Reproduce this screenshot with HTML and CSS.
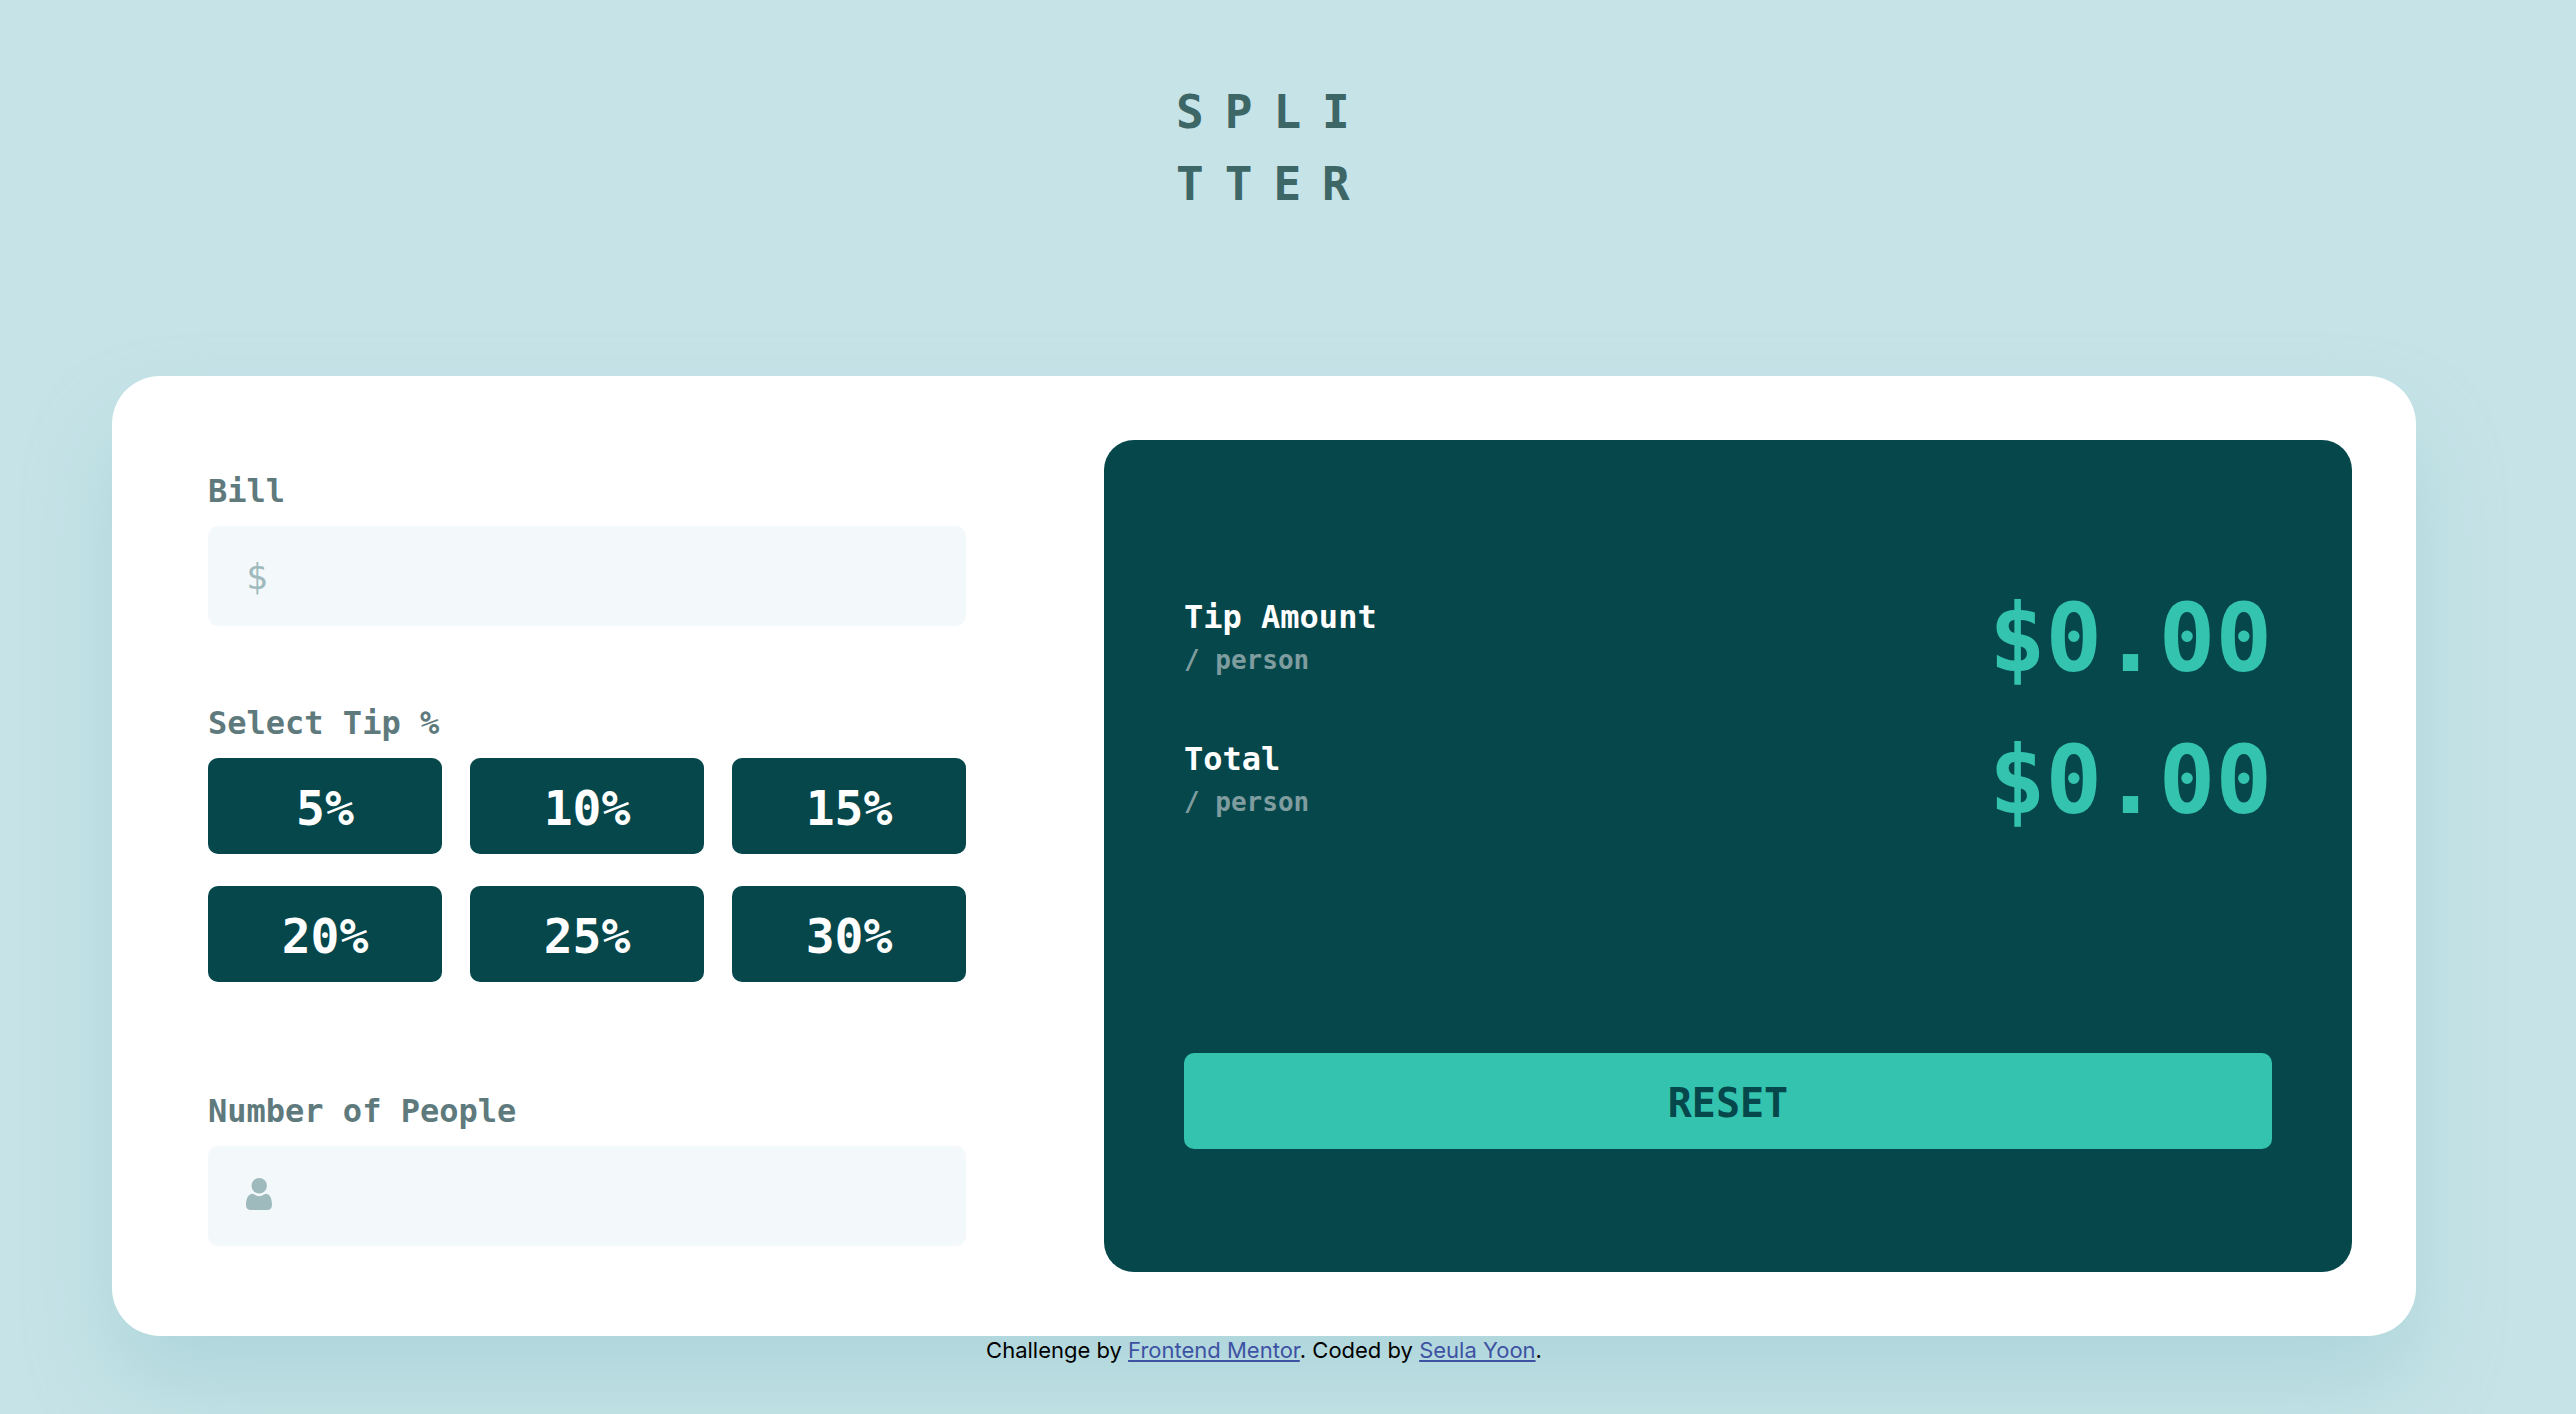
FILE: index.html
```html
<!DOCTYPE html>
<html lang="en">
<head>
  <meta charset="UTF-8">
  <meta name="viewport" content="width=device-width, initial-scale=1">
  <title>Splitter | Tip calculator</title>
  <link rel="stylesheet" href="styles.css">
</head>
<body class="page">
  <header class="header">
    <h1 class="logo">SPLI<br>TTER</h1>
  </header>
  <main class="card">
    <form class="form">
      <div class="group">
        <label class="label" for="bill">Bill</label>
        <div class="field">
          <span class="currency" aria-hidden="true">$</span>
          <input class="input" id="bill" type="text" inputmode="decimal">
        </div>
      </div>
      <fieldset class="group group-tips">
        <legend class="label">Select Tip %</legend>
        <div class="tips">
          <button class="tip" type="button">5%</button>
          <button class="tip" type="button">10%</button>
          <button class="tip" type="button">15%</button>
          <button class="tip" type="button">20%</button>
          <button class="tip" type="button">25%</button>
          <button class="tip" type="button">30%</button>
        </div>
      </fieldset>
      <div class="group">
        <label class="label" for="people">Number of People</label>
        <div class="field">
          <svg class="person" viewBox="0 0 26 32" aria-hidden="true">
            <circle cx="13.200" cy="7.700" r="7.700"/>
            <path d="M6 15.700Q7.200 15.700 8.300 16.600Q13.200 19.700 18.100 16.600Q19.200 15.700 20.400 15.700C24.300 16.200 26 21.500 26 27Q26 32 21 32H5Q0 32 0 27C0 21.500 1.900 16.200 6 15.700Z"/>
          </svg>
          <input class="input" id="people" type="text" inputmode="numeric">
        </div>
      </div>
    </form>
    <section class="results" aria-label="Results">
      <div class="result">
        <div class="caption">
          <h2 class="caption-title">Tip Amount</h2>
          <p class="caption-unit">/ person</p>
        </div>
        <output class="amount">$0.00</output>
      </div>
      <div class="result">
        <div class="caption">
          <h2 class="caption-title">Total</h2>
          <p class="caption-unit">/ person</p>
        </div>
        <output class="amount">$0.00</output>
      </div>
      <button class="reset" type="button">RESET</button>
    </section>
  </main>
  <footer class="footer">
    Challenge by <a class="link" href="#">Frontend Mentor</a>. Coded by <a class="link" href="#">Seula Yoon</a>.
  </footer>
</body>
</html>
```

FILE: styles.css
```css
* {
  box-sizing: border-box;
}

.page {
  margin: 0;
  min-height: 100vh;
  padding: 76px 160px 0 112px;
  background: #c6e3e7;
  font-family: "DejaVu Sans Mono", monospace;
  font-weight: 700;
}

.header {
  display: flex;
  justify-content: center;
  padding-bottom: 156px;
}

.logo {
  width: 176px;
  margin: 0;
  color: #3d6666;
  font-size: 46px;
  line-height: 72px;
  letter-spacing: 21px;
  white-space: nowrap;
}

.card {
  display: grid;
  grid-template-columns: 758fr 1248fr;
  column-gap: 138px;
  padding: 64px 64px 64px 96px;
  border-radius: 48px;
  background: #fff;
  box-shadow: 0 50px 90px #aed6db;
}

.form {
  display: flex;
  flex-direction: column;
  gap: 74px;
  padding: 28px 0 26px;
}

.group {
  min-width: 0;
  margin: 0;
  padding: 0;
  border: 0;
}

.group-tips {
  margin-bottom: 32px;
}

.label {
  display: block;
  margin-bottom: 12px;
  padding: 0;
  color: #5e7a7d;
  font-size: 32px;
  line-height: 46px;
}

.field {
  display: flex;
  align-items: center;
  gap: 16px;
  height: 100px;
  padding: 0 38px;
  border-radius: 10px;
  background: #f3f8fb;
}

.field:focus-within {
  outline: 4px solid #33c3ae;
}

.currency {
  color: #9fbabd;
  font-size: 36px;
  font-weight: 400;
}

.person {
  width: 26px;
  height: 32px;
  margin-bottom: 4px;
  fill: #9fbabd;
}

.input {
  flex: 1;
  min-width: 0;
  height: 100%;
  padding: 0;
  border: 0;
  outline: 0;
  background: transparent;
  color: #05474b;
  font: inherit;
  font-size: 48px;
  text-align: right;
}

.tips {
  display: grid;
  grid-template-columns: repeat(3, 1fr);
  gap: 32px 28px;
}

.tip,
.reset {
  height: 96px;
  padding: 4px 0 0;
  border: 0;
  border-radius: 10px;
  font: inherit;
  cursor: pointer;
}

.tip {
  background: #05474b;
  color: #fff;
  font-size: 48px;
}

.results {
  display: flex;
  flex-direction: column;
  gap: 32px;
  padding: 144px 80px 123px;
  border-radius: 30px;
  background: #05474b;
}

.result {
  display: flex;
  justify-content: space-between;
}

.caption {
  padding-top: 10px;
}

.caption-title,
.caption-unit {
  margin: 0;
}

.caption-title {
  color: #fff;
  font-size: 32px;
  line-height: 46px;
}

.caption-unit {
  color: #7f9c9f;
  font-size: 26px;
  line-height: 40px;
}

.amount {
  color: #33c3ae;
  font-size: 94px;
  line-height: 110px;
}

.reset {
  margin-top: auto;
  background: #33c3ae;
  color: #05474b;
  font-size: 40px;
}

.footer {
  font-family: Inter, sans-serif;
  font-size: 22px;
  font-weight: 400;
  line-height: 28px;
  text-align: center;
}

.link {
  color: #3e52a3;
}
```
